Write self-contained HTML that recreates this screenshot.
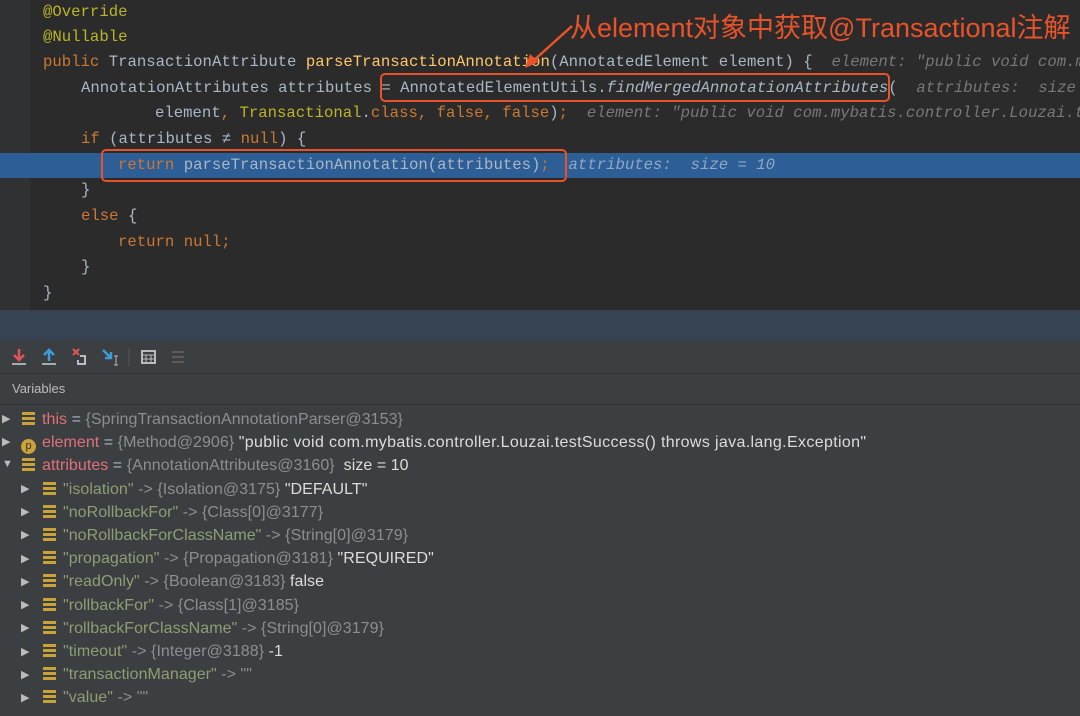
<!DOCTYPE html><html><head><meta charset="utf-8"><style>
body{margin:0;width:1080px;height:716px;overflow:hidden;background:#3c3f41;position:relative;font-family:"Liberation Sans",sans-serif}
.code{position:absolute;left:0;top:0;width:1080px;height:310px;background:#2b2b2b}
.gut{position:absolute;left:0;top:0;width:30px;height:310px;background:#2f3133}
.ln{position:absolute;left:0;height:25.6px;line-height:25.6px;font-family:"Liberation Mono",monospace;font-size:15.65px;color:#a9b7c6;white-space:pre}
.k{color:#cc7832}.a{color:#bbb529}.f{color:#ffc66d}.h{color:#787878;font-style:italic}.c{color:#9876aa}
.hl{position:absolute;left:0;top:153px;width:1080px;height:25px;background:#2d5e96}
.box{position:absolute;border:2.5px solid #e8532a;border-radius:5px}
.var{position:absolute;left:0;height:23px;line-height:23px;font-size:16px;letter-spacing:0.05px;color:#a9b7c6;white-space:pre}
.n{color:#e0707a}.g{color:#8b8f92}.s{color:#8d9e73}.w{color:#dcdcdc}
.ic{display:inline-block;width:13px;height:13px;vertical-align:-1px;background:repeating-linear-gradient(#c9a23a 0 3px,transparent 3px 5px);margin-right:7px}
.tri{position:absolute;color:#bbb;font-size:11px}
</style></head><body>
<div class="code"></div><div class="gut"></div>
<div class="hl"></div>
<div class="ln" style="top:0;left:43px"><span class="a">@Override</span></div>
<div class="ln" style="top:25px;left:43px"><span class="a">@Nullable</span></div>
<div class="ln" style="top:50px;left:43px"><span class="k">public </span>TransactionAttribute <span class="f">parseTransactionAnnotation</span>(AnnotatedElement element) {  <span class="h">element: "public void com.m</span></div>
<div class="ln" style="top:76px;left:81px">AnnotationAttributes attributes = AnnotatedElementUtils.<i>findMergedAnnotationAttributes</i>(  <span class="h">attributes:  size</span></div>
<div class="ln" style="top:101px;left:155px">element<span class="k">, </span><span class="a">Transactional</span>.<span class="k">class, false, false</span>)<span class="k">;</span>  <span class="h">element: "public void com.mybatis.controller.Louzai.t</span></div>
<div class="ln" style="top:127px;left:81px"><span class="k">if </span>(attributes ≠ <span class="k">null</span>) {</div>
<div class="ln" style="top:153px;left:118px"><span class="k">return </span>parseTransactionAnnotation(attributes)<span class="k">;</span>  <span class="h" style="color:#8fa8c8">attributes:  size = 10</span></div>
<div class="ln" style="top:178px;left:81px">}</div>
<div class="ln" style="top:204px;left:81px"><span class="k">else </span>{</div>
<div class="ln" style="top:230px;left:118px"><span class="k">return null;</span></div>
<div class="ln" style="top:255px;left:81px">}</div>
<div class="ln" style="top:281px;left:43px">}</div>
<div class="box" style="left:380px;top:73px;width:506px;height:25px"></div>
<div class="box" style="left:101px;top:149px;width:462px;height:29px"></div>
<svg style="position:absolute;left:520px;top:20px" width="60" height="50"><line x1="52" y1="6" x2="12" y2="42" stroke="#e8532a" stroke-width="2.5"/><polygon points="5,48 10,34 19,42" fill="#e8532a"/></svg>
<div style="position:absolute;left:570px;top:6px;font-size:27px;color:#e8532a;font-family:'Liberation Sans','Noto Sans CJK SC',sans-serif;white-space:nowrap">从element对象中获取@Transactional注解</div>
<div style="position:absolute;left:0;top:310px;width:1080px;height:30px;background:#364352"></div>
<div style="position:absolute;left:0;top:340px;width:1080px;height:33px;background:#3c3f41;border-bottom:1px solid #323232"></div>
<svg style="position:absolute;left:8px;top:346px" width="190" height="22">
<path d="M11 3v10M6 9l5 5 5-5" stroke="#e05555" stroke-width="2.5" fill="none"/><rect x="4" y="17" width="14" height="2" fill="#aaa"/>
<path d="M41 15V5M36 9l5-5 5 5" stroke="#3d9ddc" stroke-width="2.5" fill="none"/><rect x="34" y="17" width="14" height="2" fill="#aaa"/>
<path d="M65 3l6 6M71 3l-6 6" stroke="#e05555" stroke-width="2"/><path d="M72 10h5v8h-7v-4" stroke="#bbb" stroke-width="2" fill="none"/>
<path d="M95 4l8 8M103 6v6h-6" stroke="#3d9ddc" stroke-width="2.5" fill="none"/><path d="M106 10h4M108 10v9M106 19h4" stroke="#bbb" stroke-width="1"/>
<line x1="121" y1="2" x2="121" y2="20" stroke="#555"/>
<rect x="134" y="5" width="13" height="12" fill="none" stroke="#bbb" stroke-width="2"/><path d="M134 9h13M138 9v8M143 9v8M134 13h13" stroke="#bbb"/>
<path d="M164 6h12M164 11h12M164 16h12" stroke="#666" stroke-width="1.5"/>
</svg>
<div style="position:absolute;left:12px;top:381px;font-size:13px;color:#bbb">Variables</div>
<div style="position:absolute;left:0;top:404px;width:1080px;height:1px;background:#323232"></div>
<div class="tri" style="left:2px;top:412px">▶</div>
<div class="var" style="top:408px;left:22px"><span class="ic"></span><span class="n">this</span> = <span class="g">{SpringTransactionAnnotationParser@3153}</span></div>
<div class="tri" style="left:2px;top:435px">▶</div>
<div class="var" style="top:431px;left:21px"><span style="display:inline-block;width:15px;height:15px;border-radius:50%;background:#c9a23a;color:#333;font-size:11px;line-height:15px;text-align:center;vertical-align:-2px;margin-right:6px;letter-spacing:0">p</span><span class="n">element</span> = <span class="g">{Method@2906}</span> <span class="w" style="letter-spacing:0.35px">"public void com.mybatis.controller.Louzai.testSuccess() throws java.lang.Exception"</span></div>
<div class="tri" style="left:2px;top:458px">▼</div>
<div class="var" style="top:454px;left:22px"><span class="ic"></span><span class="n">attributes</span> = <span class="g">{AnnotationAttributes@3160}</span>  <span class="w">size = 10</span></div>
<div class="tri" style="left:21px;top:482px">▶</div><div class="var" style="top:477.5px;left:43px"><span class="ic"></span><span class="s">"isolation"</span> <span class="g">-&gt; {Isolation@3175}</span> <span class="w">"DEFAULT"</span></div>
<div class="tri" style="left:21px;top:505px">▶</div><div class="var" style="top:500.7px;left:43px"><span class="ic"></span><span class="s">"noRollbackFor"</span> <span class="g">-&gt; {Class[0]@3177}</span></div>
<div class="tri" style="left:21px;top:528px">▶</div><div class="var" style="top:523.9px;left:43px"><span class="ic"></span><span class="s">"noRollbackForClassName"</span> <span class="g">-&gt; {String[0]@3179}</span></div>
<div class="tri" style="left:21px;top:552px">▶</div><div class="var" style="top:547.1px;left:43px"><span class="ic"></span><span class="s">"propagation"</span> <span class="g">-&gt; {Propagation@3181}</span> <span class="w">"REQUIRED"</span></div>
<div class="tri" style="left:21px;top:575px">▶</div><div class="var" style="top:570.3px;left:43px"><span class="ic"></span><span class="s">"readOnly"</span> <span class="g">-&gt; {Boolean@3183}</span> <span class="w">false</span></div>
<div class="tri" style="left:21px;top:598px">▶</div><div class="var" style="top:593.5px;left:43px"><span class="ic"></span><span class="s">"rollbackFor"</span> <span class="g">-&gt; {Class[1]@3185}</span></div>
<div class="tri" style="left:21px;top:621px">▶</div><div class="var" style="top:616.7px;left:43px"><span class="ic"></span><span class="s">"rollbackForClassName"</span> <span class="g">-&gt; {String[0]@3179}</span></div>
<div class="tri" style="left:21px;top:645px">▶</div><div class="var" style="top:639.9px;left:43px"><span class="ic"></span><span class="s">"timeout"</span> <span class="g">-&gt; {Integer@3188}</span> <span class="w">-1</span></div>
<div class="tri" style="left:21px;top:668px">▶</div><div class="var" style="top:663.1px;left:43px"><span class="ic"></span><span class="s">"transactionManager"</span> <span class="g">-&gt; ""</span></div>
<div class="tri" style="left:21px;top:691px">▶</div><div class="var" style="top:686.3px;left:43px"><span class="ic"></span><span class="s">"value"</span> <span class="g">-&gt; ""</span></div>
</body></html>
